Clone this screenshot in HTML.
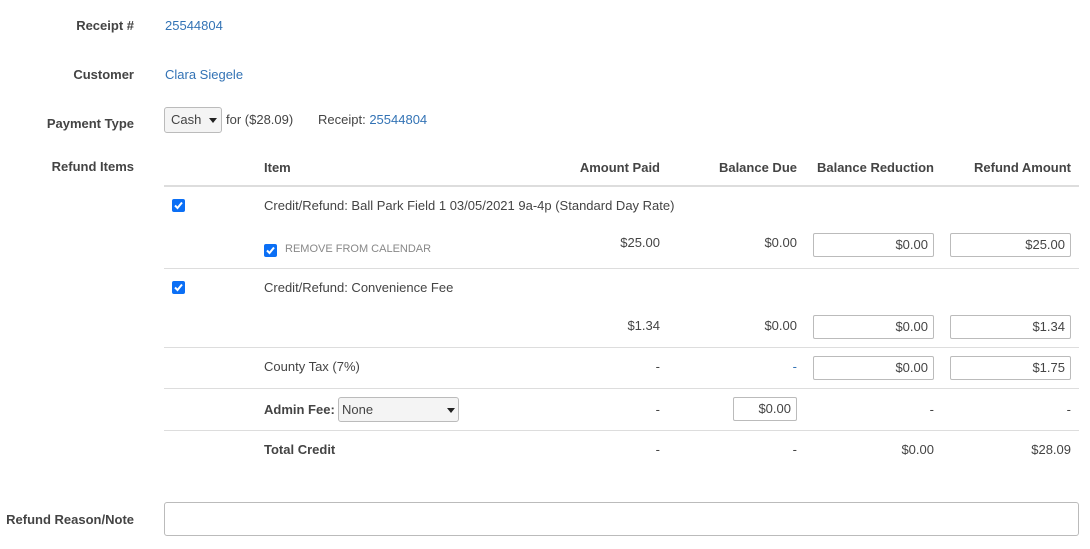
<!DOCTYPE html>
<html><head><style>
body{margin:0;width:1090px;height:549px;background:#fff;font-family:"Liberation Sans",sans-serif;font-size:13px;color:#444;position:relative;overflow:hidden}
.a{position:absolute;white-space:nowrap;line-height:16px}
.l{font-weight:bold;color:#444;right:956px;text-align:right}
.r{text-align:right}
.lk{color:#3373b5}
.hd{font-weight:bold;color:#444}
.hr{position:absolute;left:164px;width:915px;height:1px;background:#ddd}
.in{position:absolute;box-sizing:border-box;border:1px solid #bbb;border-radius:2px;height:24px;text-align:right;padding:3px 5px 0 0;line-height:16px;background:#fff}
.cb{position:absolute;width:13px;height:13px;background:#0b6ff5;border-radius:2px}
.cb svg{position:absolute;left:1px;top:1px}
.sel{position:absolute;box-sizing:border-box;border:1px solid #bbb;border-radius:3px;background:#f4f4f4;line-height:16px;padding:4px 0 0 6px}
.tri{position:absolute;width:0;height:0;border-left:4px solid transparent;border-right:4px solid transparent;border-top:5px solid #222}
</style></head><body>
<div class="a l" style="top:18px">Receipt #</div>
<div class="a lk" style="left:165px;top:18px">25544804</div>
<div class="a l" style="top:67px">Customer</div>
<div class="a lk" style="left:165px;top:67px">Clara Siegele</div>
<div class="a l" style="top:116px">Payment Type</div>
<div class="sel" style="left:164px;top:107px;width:58px;height:26px">Cash<div class="tri" style="left:44px;top:10px"></div></div>
<div class="a" style="left:226px;top:112px">for ($28.09)</div>
<div class="a" style="left:318px;top:112px">Receipt: <span class="lk">25544804</span></div>
<div class="a l" style="top:159px">Refund Items</div>

<div class="a hd" style="left:264px;top:160px">Item</div>
<div class="a hd r" style="right:430px;top:160px">Amount Paid</div>
<div class="a hd r" style="right:293px;top:160px">Balance Due</div>
<div class="a hd r" style="right:156px;top:160px">Balance Reduction</div>
<div class="a hd r" style="right:19px;top:160px">Refund Amount</div>
<div class="hr" style="top:185px;height:2px"></div>

<div class="cb" style="left:172px;top:199px"><svg width="11" height="11"><path d="M2 5.5L4.5 8L9 2.5" stroke="#fff" stroke-width="2" fill="none"/></svg></div>
<div class="a" style="left:264px;top:198px">Credit/Refund: Ball Park Field 1 03/05/2021 9a-4p (Standard Day Rate)</div>
<div class="cb" style="left:264px;top:244px"><svg width="11" height="11"><path d="M2 5.5L4.5 8L9 2.5" stroke="#fff" stroke-width="2" fill="none"/></svg></div>
<div class="a" style="left:285px;top:241px;font-size:11px;color:#888">REMOVE FROM CALENDAR</div>
<div class="a r" style="right:430px;top:235px">$25.00</div>
<div class="a r" style="right:293px;top:235px">$0.00</div>
<div class="in" style="left:813px;top:233px;width:121px">$0.00</div>
<div class="in" style="left:950px;top:233px;width:121px">$25.00</div>
<div class="hr" style="top:268px"></div>

<div class="cb" style="left:172px;top:281px"><svg width="11" height="11"><path d="M2 5.5L4.5 8L9 2.5" stroke="#fff" stroke-width="2" fill="none"/></svg></div>
<div class="a" style="left:264px;top:280px">Credit/Refund: Convenience Fee</div>
<div class="a r" style="right:430px;top:318px">$1.34</div>
<div class="a r" style="right:293px;top:318px">$0.00</div>
<div class="in" style="left:813px;top:315px;width:121px">$0.00</div>
<div class="in" style="left:950px;top:315px;width:121px">$1.34</div>
<div class="hr" style="top:347px"></div>

<div class="a" style="left:264px;top:359px">County Tax (7%)</div>
<div class="a r" style="right:430px;top:359px">-</div>
<div class="a r lk" style="right:293px;top:359px">-</div>
<div class="in" style="left:813px;top:356px;width:121px">$0.00</div>
<div class="in" style="left:950px;top:356px;width:121px">$1.75</div>
<div class="hr" style="top:388px"></div>

<div class="a hd" style="left:264px;top:402px">Admin Fee:</div>
<div class="sel" style="left:338px;top:397px;width:121px;height:25px;padding-left:3px">None<div class="tri" style="left:108px;top:10px"></div></div>
<div class="a r" style="right:430px;top:402px">-</div>
<div class="in" style="left:733px;top:397px;width:64px">$0.00</div>
<div class="a r" style="right:156px;top:402px">-</div>
<div class="a r" style="right:19px;top:402px">-</div>
<div class="hr" style="top:430px"></div>

<div class="a hd" style="left:264px;top:442px">Total Credit</div>
<div class="a r" style="right:430px;top:442px">-</div>
<div class="a r" style="right:293px;top:442px">-</div>
<div class="a r" style="right:156px;top:442px">$0.00</div>
<div class="a r" style="right:19px;top:442px">$28.09</div>

<div class="a l" style="top:512px">Refund Reason/Note</div>
<div class="in" style="left:164px;top:502px;width:915px;height:34px;border-radius:3px"></div>
</body></html>
